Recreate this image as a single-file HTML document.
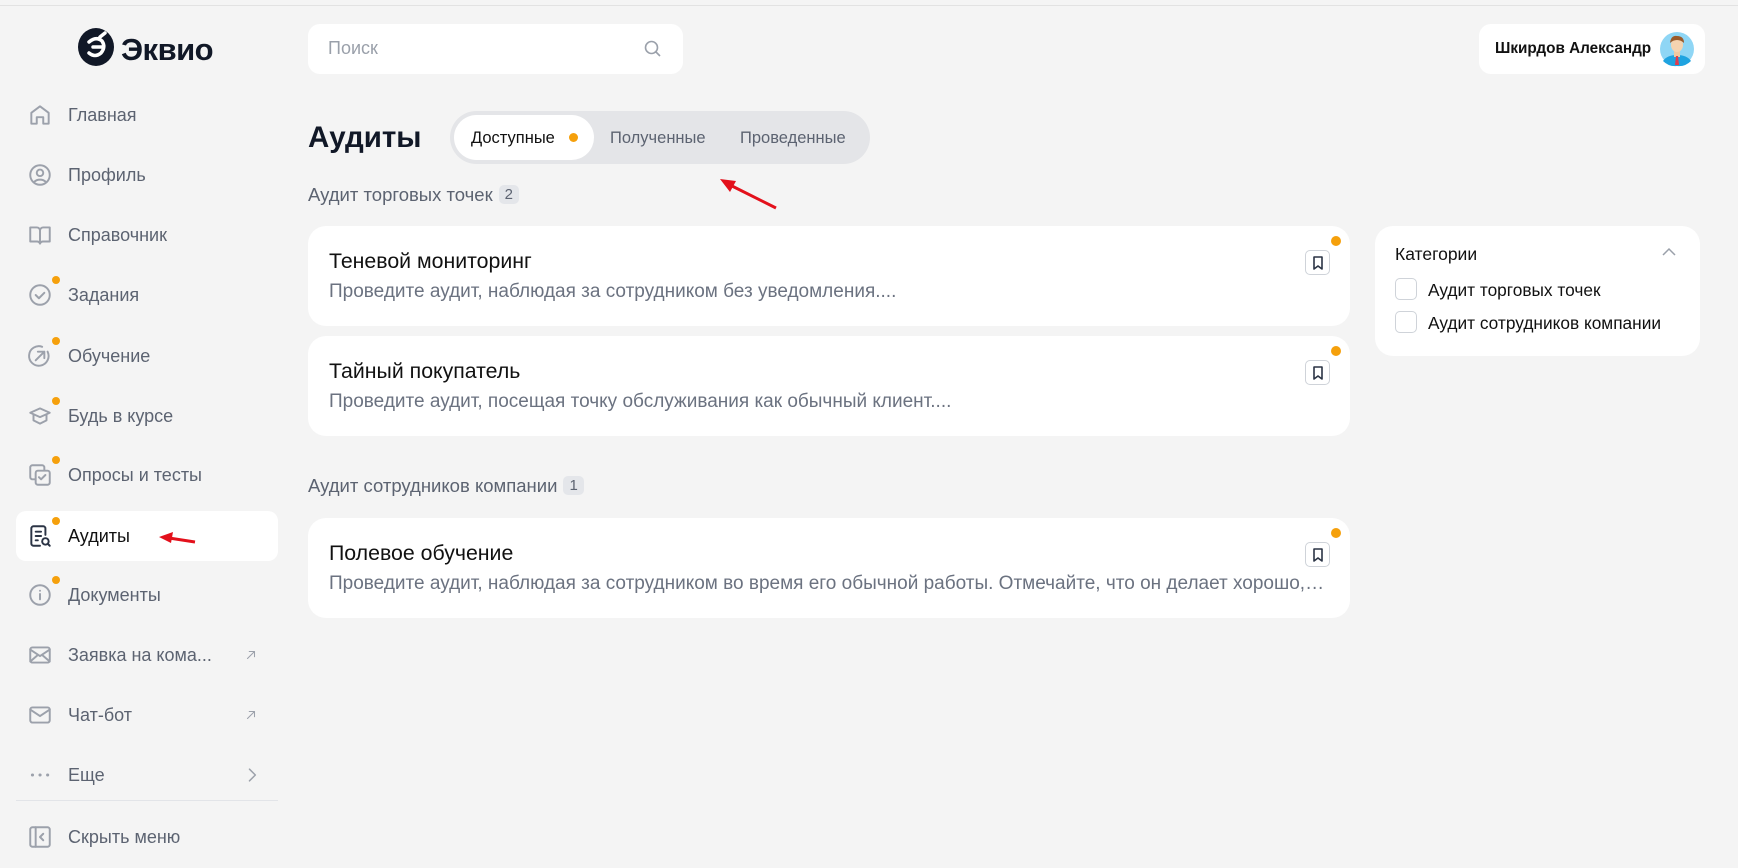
<!DOCTYPE html>
<html><head><meta charset="utf-8"><style>
*{box-sizing:border-box;margin:0;padding:0}
body{width:1738px;height:868px;background:#f4f4f4;font-family:"Liberation Sans","Noto Sans CJK SC",sans-serif;position:relative;overflow:hidden}
.a{position:absolute}
.nav{position:absolute;left:16px;width:262px;height:50px;display:flex;align-items:center;font-size:18px;color:#5c6371}
.nav svg{position:absolute;left:11px;width:26px;height:26px;fill:none;stroke:#9ca1ab;stroke-width:1.8;stroke-linecap:round;stroke-linejoin:round}
.nav span{position:absolute;left:52px}
.dot{position:absolute;width:8px;height:8px;border-radius:50%;background:#f5a00c}
.nav .dot{left:36px;top:6px}
.card{position:absolute;left:308px;width:1042px;background:#fff;border-radius:18px}
.card h3{position:absolute;left:21px;top:23px;font-size:21.3px;font-weight:normal;color:#111}
.card p{position:absolute;left:21px;top:55px;font-size:19px;color:#6b7280;white-space:nowrap;width:1000px;overflow:hidden;text-overflow:ellipsis}
.bm{position:absolute;left:997px;top:24px;width:25px;height:25px;border:1px solid #cfd3d9;border-radius:5px}
.card .dot{left:1023px;top:10px;width:10px;height:10px}
.sec{position:absolute;left:308px;font-size:18.5px;color:#5c6371}
.badge{display:inline-block;background:#e4e6ea;border-radius:5px;padding:1px 6px;font-size:15px;margin-left:6px;color:#5c6371;vertical-align:2px}
.cb{position:absolute;left:1395px;width:22px;height:22px;border:1px solid #cfd3d9;border-radius:5px;background:#fff}
</style></head><body>
<div class="a" style="left:0;top:5px;width:1738px;height:1px;background:#e2e2e2"></div>
<div class="a" style="left:78px;top:28px;width:36px;height:38px;border-radius:50%;background:#111827"></div>
<svg class="a" style="left:78px;top:28px" width="36" height="38" viewBox="0 0 36 38"><path d="M11 14 Q18 8 24 13 Q28 19 23 25 Q17 30 11 25 M15 19 H24 M22 9 L27 5" stroke="#fff" stroke-width="3.5" fill="none" stroke-linecap="round"/></svg>
<div class="a" style="left:121px;top:32px;font-size:31px;font-weight:bold;color:#111827;letter-spacing:-0.5px">Эквио</div>

<div class="nav" style="top:90px"><svg viewBox="0 0 24 24"><path d="M4 20V10l8-6 8 6v10h-5v-6h-6v6z"/></svg><span>Главная</span></div>
<div class="nav" style="top:150px"><svg viewBox="0 0 24 24"><circle cx="12" cy="12" r="9"/><circle cx="12" cy="10" r="3"/><path d="M6.5 18.5c3-3 8-3 11 0"/></svg><span>Профиль</span></div>
<div class="nav" style="top:210px"><svg viewBox="0 0 24 24"><path d="M3 5h6a3 3 0 013 3v12a3 3 0 00-3-2H3zM21 5h-6a3 3 0 00-3 3v12a3 3 0 013-2h6z"/></svg><span>Справочник</span></div>
<div class="nav" style="top:270px"><i class="dot"></i><svg viewBox="0 0 24 24"><circle cx="12" cy="12" r="9"/><path d="M8 12l3 3 5-5"/></svg><span>Задания</span></div>
<div class="nav" style="top:331px"><i class="dot"></i><svg viewBox="0 0 24 24"><path d="M19 8a9 9 0 11-5-4.5"/><path d="M8 16l8-8M10 8h6v6"/></svg><span>Обучение</span></div>
<div class="nav" style="top:391px"><i class="dot"></i><svg viewBox="0 0 24 24"><path d="M3 9l9-4 9 4-9 4z"/><path d="M6 11v5l6 3 6-3v-5"/></svg><span>Будь в курсе</span></div>
<div class="nav" style="top:450px"><i class="dot"></i><svg viewBox="0 0 24 24"><rect x="3" y="3" width="13" height="13" rx="2"/><rect x="8" y="8" width="13" height="13" rx="2" fill="#f4f4f4"/><path d="M11 14l2 2 4-4"/></svg><span>Опросы и тесты</span></div>
<div class="nav" style="top:511px;background:#fff;border-radius:10px"><i class="dot"></i><svg viewBox="0 0 24 24" style="stroke:#2b3445"><path d="M17 11V5a2 2 0 00-2-2H6a2 2 0 00-2 2v14a2 2 0 002 2h6"/><path d="M8 8h5M8 12h5M8 16h2"/><circle cx="17" cy="17" r="3"/><path d="M19.5 19.5L21 21"/></svg><span style="color:#111">Аудиты</span></div>
<div class="nav" style="top:570px"><i class="dot"></i><svg viewBox="0 0 24 24"><circle cx="12" cy="12" r="9"/><path d="M12 11v5M12 8v.1"/></svg><span>Документы</span></div>
<div class="nav" style="top:630px"><svg viewBox="0 0 24 24"><rect x="3" y="5" width="18" height="14" rx="2"/><path d="M3 7l9 6 9-6M3 18l7-6M21 18l-7-6"/></svg><span>Заявка на кома...</span><svg viewBox="0 0 24 24" style="left:228px;width:14px;height:14px"><path d="M6 18L18 6M9 6h9v9"/></svg></div>
<div class="nav" style="top:690px"><svg viewBox="0 0 24 24"><rect x="3" y="5" width="18" height="14" rx="2"/><path d="M3 7l9 6 9-6"/></svg><span>Чат-бот</span><svg viewBox="0 0 24 24" style="left:228px;width:14px;height:14px"><path d="M6 18L18 6M9 6h9v9"/></svg></div>
<div class="nav" style="top:750px"><svg viewBox="0 0 24 24" style="stroke-width:2.8"><path d="M5 12h.1M12 12h.1M19 12h.1"/></svg><span>Еще</span><svg viewBox="0 0 24 24" style="left:226px;width:20px;height:20px"><path d="M9 5l7 7-7 7"/></svg></div>
<div class="a" style="left:16px;top:800px;width:262px;height:1px;background:#e2e4e8"></div>
<div class="nav" style="top:812px"><svg viewBox="0 0 24 24"><rect x="3" y="3" width="18" height="18" rx="2"/><path d="M8 3v18M15 9l-3 3 3 3"/></svg><span>Скрыть меню</span></div>
<svg class="a" style="left:155px;top:530px" width="45" height="20"><path d="M40 12 L14 8" stroke="#e3101b" stroke-width="3"/><path d="M4 7 L18 2 L16 13z" fill="#e3101b"/></svg>

<div class="a" style="left:308px;top:24px;width:375px;height:50px;background:#fff;border-radius:12px"></div>
<div class="a" style="left:328px;top:38px;font-size:18px;color:#9aa0aa">Поиск</div>
<svg class="a" style="left:643px;top:39px" width="20" height="20" viewBox="0 0 20 20"><circle cx="8.5" cy="8.5" r="6" stroke="#9aa0aa" stroke-width="1.6" fill="none"/><path d="M13 13l4 4" stroke="#9aa0aa" stroke-width="1.6"/></svg>

<div class="a" style="left:1479px;top:24px;width:226px;height:50px;background:#fff;border-radius:12px"></div>
<div class="a" style="left:1495px;top:40px;font-size:15.3px;font-weight:bold;color:#111">Шкирдов Александр</div>
<svg class="a" style="left:1659px;top:31px" width="36" height="36" viewBox="0 0 36 36"><circle cx="18" cy="18" r="17" fill="#8fd6f5"/><path d="M4 30 Q8 24 18 24 Q28 24 32 30 Q26 36 18 35 Q10 36 4 30" fill="#1fa3e0"/><rect x="15" y="20" width="6" height="6" fill="#f0c9a0"/><path d="M17 25h2l1 9h-4z" fill="#e03b4c"/><ellipse cx="18" cy="14" rx="6" ry="7" fill="#f5d3b0"/><path d="M11 12 Q12 4 18 5 Q25 5 25 12 Q22 9 18 9 Q14 9 11 12" fill="#9a5a2a"/></svg>

<div class="a" style="left:308px;top:121px;font-size:29.5px;font-weight:bold;color:#111827">Аудиты</div>
<div class="a" style="left:450px;top:111px;width:420px;height:53px;background:#e4e5e8;border-radius:27px"></div>
<div class="a" style="left:454px;top:115px;width:140px;height:45px;background:#fff;border-radius:23px"></div>
<div class="a" style="left:471px;top:129px;font-size:16.5px;color:#111">Доступные</div>
<div class="dot" style="left:569px;top:133px;width:9px;height:9px"></div>
<div class="a" style="left:610px;top:129px;font-size:16.5px;color:#5c6371">Полученные</div>
<div class="a" style="left:740px;top:129px;font-size:16.5px;color:#5c6371">Проведенные</div>
<svg class="a" style="left:712px;top:172px" width="70" height="42"><path d="M64 36 L20 14" stroke="#e3101b" stroke-width="3"/><path d="M8 7 L24 9 L18 20z" fill="#e3101b"/></svg>

<div class="sec" style="top:184px">Аудит торговых точек<span class="badge">2</span></div>
<div class="card" style="top:226px;height:100px"><h3>Теневой мониторинг</h3><p>Проведите аудит, наблюдая за сотрудником без уведомления....</p><div class="bm"></div><i class="dot"></i></div>
<div class="card" style="top:336px;height:100px"><h3>Тайный покупатель</h3><p>Проведите аудит, посещая точку обслуживания как обычный клиент....</p><div class="bm"></div><i class="dot"></i></div>
<div class="sec" style="top:475px">Аудит сотрудников компании<span class="badge">1</span></div>
<div class="card" style="top:518px;height:100px"><h3>Полевое обучение</h3><p>Проведите аудит, наблюдая за сотрудником во время его обычной работы. Отмечайте, что он делает хорошо, где нужно улучшить</p><div class="bm"></div><i class="dot"></i></div>
<svg class="a" style="left:1310px;top:255px" width="16" height="16" viewBox="0 0 16 16"><path d="M4 2h8v12l-4-3-4 3z" fill="none" stroke="#2b3445" stroke-width="1.6" stroke-linejoin="round"/></svg>
<svg class="a" style="left:1310px;top:365px" width="16" height="16" viewBox="0 0 16 16"><path d="M4 2h8v12l-4-3-4 3z" fill="none" stroke="#2b3445" stroke-width="1.6" stroke-linejoin="round"/></svg>
<svg class="a" style="left:1310px;top:547px" width="16" height="16" viewBox="0 0 16 16"><path d="M4 2h8v12l-4-3-4 3z" fill="none" stroke="#2b3445" stroke-width="1.6" stroke-linejoin="round"/></svg>

<div class="a" style="left:1375px;top:226px;width:325px;height:130px;background:#fff;border-radius:18px"></div>
<div class="a" style="left:1395px;top:244px;font-size:17.5px;color:#111">Категории</div>
<svg class="a" style="left:1661px;top:246px" width="16" height="12"><path d="M2 9l6-6 6 6" stroke="#9aa0aa" stroke-width="1.5" fill="none"/></svg>
<div class="cb" style="top:278px"></div><div class="a" style="left:1428px;top:280px;font-size:17.3px;color:#111">Аудит торговых точек</div>
<div class="cb" style="top:311px"></div><div class="a" style="left:1428px;top:313px;font-size:17.3px;color:#111">Аудит сотрудников компании</div>
</body></html>
